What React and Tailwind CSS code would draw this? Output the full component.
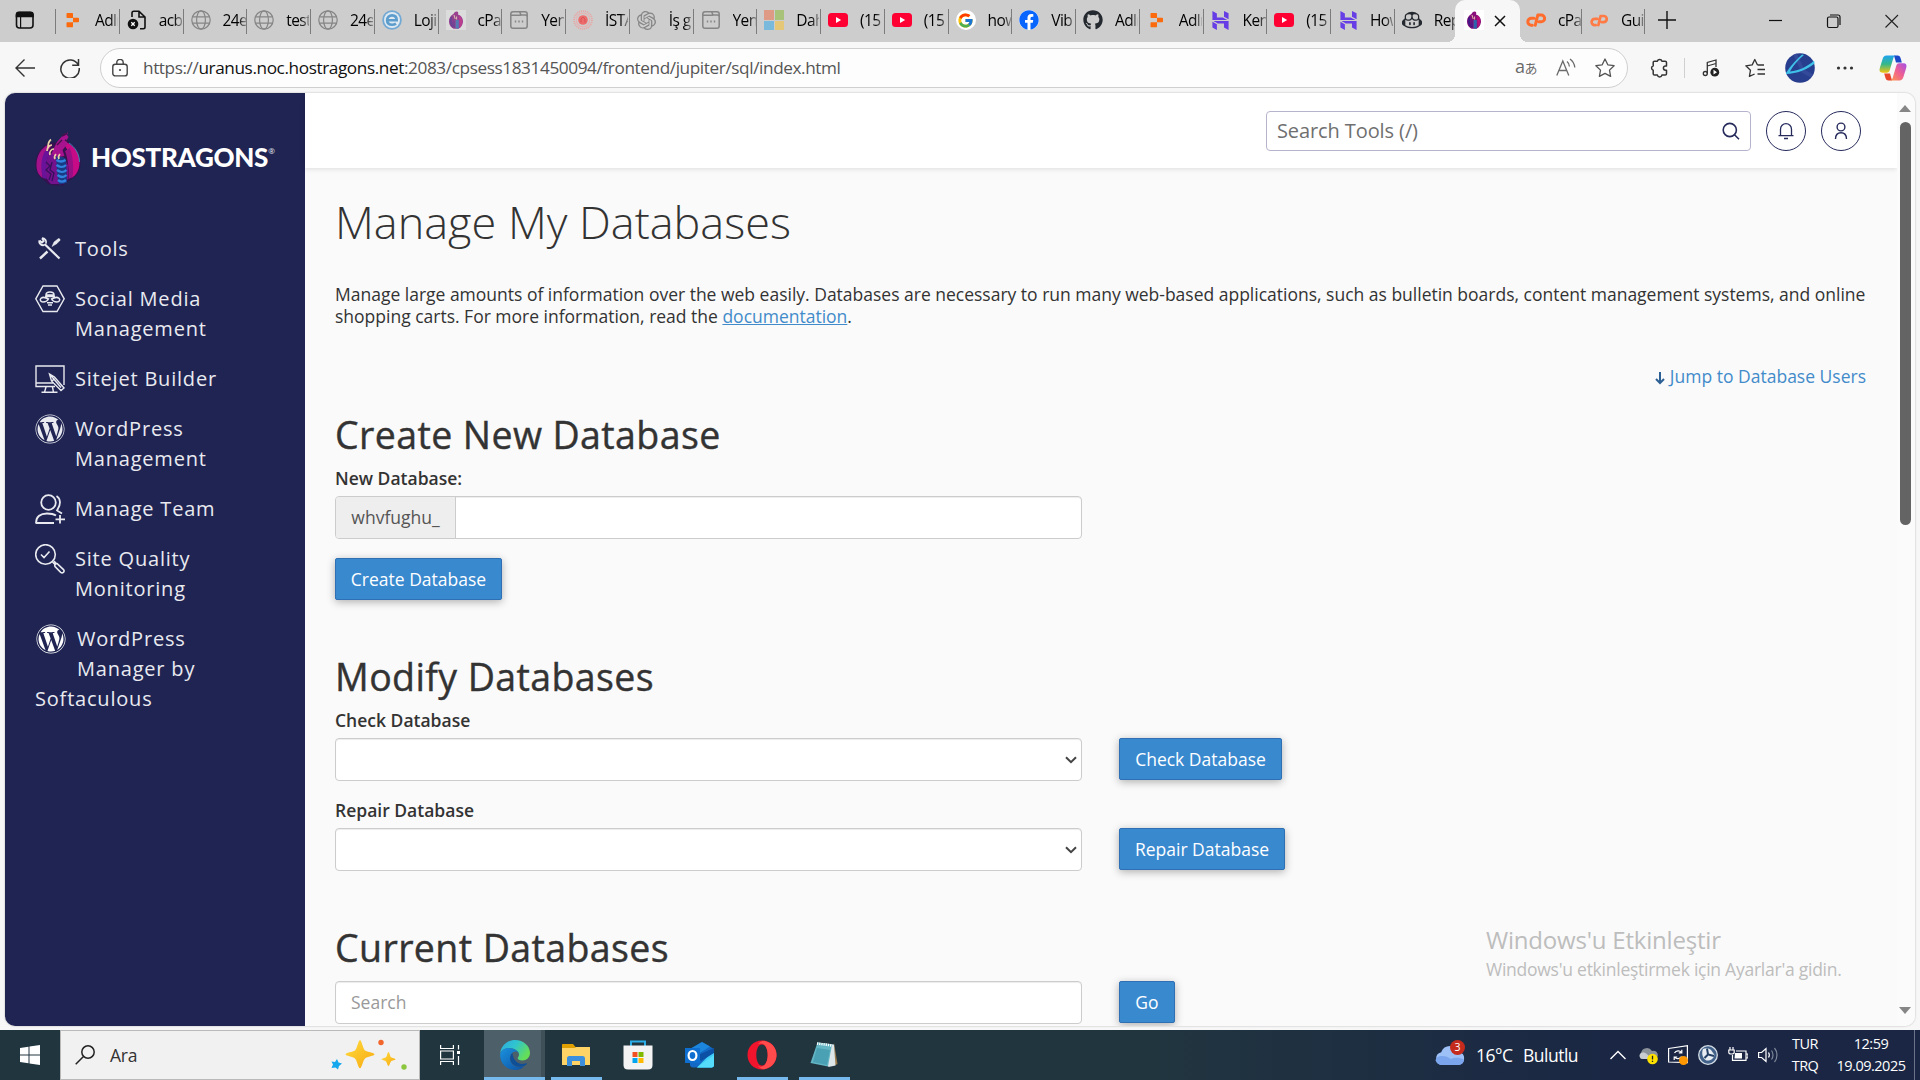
import React from "react";
import { FcGoogle } from "react-icons/fc";
import { FaWordpress, FaGithub, FaFacebook } from "react-icons/fa";
import { SiOpenai, SiGithubcopilot, SiHostinger } from "react-icons/si";

const Globe = () => (
  <svg viewBox="0 0 20 20" className="size-5" fill="none" stroke="#858585" strokeWidth="1.2">
    <circle cx="10" cy="10" r="9.2" />
    <ellipse cx="10" cy="10" rx="4.4" ry="9.2" />
    <path d="M1.5 6.8h17M1.5 13.2h17" />
  </svg>
);
const Adl = () => (
  <svg viewBox="0 0 20 20" className="size-5" fill="#fb6a0c">
    <path d="M4.500 3h4.500c.6 0 1 .4 1 1v4H4.500c-.6 0-1-.4-1-1V4c0-.6.400-1 1-1zM10 7.800h5c.6 0 1 .4 1 1v2.400c0 .6-.4 1-1 1h-5zM4.500 12.200H10v4c0 .6-.4 1-1 1H4.500c-.6 0-1-.4-1-1v-3c0-.6.400-1 1-1z" />
  </svg>
);
const DocX = () => (
  <svg viewBox="0 0 20 20" className="size-5" fill="none" stroke="#111" strokeWidth="1.6">
    <path d="M5 7V3c0-1 .7-1.700 1.700-1.700h5.300L18 7V17c0 1-.7 1.700-1.700 1.700H13M12 1.500V7H18" />
    <circle cx="6" cy="14" r="5.300" fill="#111" stroke="none" />
    <path d="M4.300 12.300l3.400 3.400M7.700 12.300l-3.400 3.400" stroke="#fff" strokeWidth="1.300" />
  </svg>
);
const Loji = () => (
  <svg viewBox="0 0 20 20" className="size-5" fill="none">
    <circle cx="10" cy="10" r="9.800" fill="#72a9d4" />
    <circle cx="10" cy="10" r="8" fill="#dfe9f1" />
    <path d="M5 10.300h9.700c0-3-1.900-4.900-4.700-4.900-2.800 0-4.900 2-4.900 4.700 0 2.900 2 4.700 5 4.700 1.500 0 2.800-.4 3.900-1.200" stroke="#5c9dce" strokeWidth="2.600" />
  </svg>
);
const Dragon = ({ faded }) => (
  <span className={faded ? "flex size-5 items-center justify-center bg-[#e3e1e3] opacity-75" : "flex size-5 items-center justify-center bg-white"}>
    <svg viewBox="0 0 20 20" className="size-5">
      <path d="M10.500 1.500c2 0 2 1.600 1.500 3 3 1 5.300 3.800 5 7.500-.3 3.400-2.300 5.800-4.500 6.800h-5C5 17.500 3 15 3 11.500 3 8 4.700 5.300 7.500 4c.6-1.500 1.700-2.500 3-2.500z" fill="#8a1179" />
      <path d="M4 8c-1 4 0 7.500 3 10L6 6zM8 6l1 12-2-1z" fill="#4a1584" />
      <path d="M13 5c4 3 4.400 8.500.8 12.800z" fill="#b50f7d" />
      <path d="M9.600 10h3.200v8.600H9.600z" fill="#2b62ad" />
      <path d="M8 5l1.200 4M10.600 6.500v3" stroke="#e9d3b0" strokeWidth=".9" />
    </svg>
  </span>
);
const Win = () => (
  <svg viewBox="0 0 20 20" className="size-5" fill="none" stroke="#858585" strokeWidth="1.500">
    <path d="M1.800 4c0-1.500.8-2.300 2.300-2.300h6.500l1.400 3.400h4.200c1.400 0 2 .8 2 2V16c0 1.500-.9 2.300-2.300 2.300H4.100c-1.500 0-2.300-.8-2.300-2.300zM2 5.200h10M11 1.700h5c1.500 0 2.200.8 2.200 2.300v3" />
    <path d="M5.800 11.500h1.400M9.300 11.500h1.400M12.800 11.500h1.400" strokeWidth="1.800" />
  </svg>
);
const Seal = () => (
  <svg viewBox="0 0 20 20" className="size-5" fill="none">
    <circle cx="10" cy="10" r="9" stroke="#e7a6a6" strokeWidth="1.700" strokeDasharray="1.200 .8" />
    <circle cx="10" cy="10" r="6.800" stroke="#e7b1b1" strokeWidth="1.200" />
    <circle cx="10" cy="10" r="4.800" fill="#ee6b6b" />
    <path d="M8 12.500V9l2-2 2 2v3.500" stroke="#d95454" />
  </svg>
);
const Ms = () => (
  <span className="grid size-5 grid-cols-2 gap-px">
    <i className="bg-[#df9a86]" /><i className="bg-[#a9c27a]" /><i className="bg-[#79b9dc]" /><i className="bg-[#e5c877]" />
  </span>
);
const Yt = () => (
  <svg viewBox="0 0 20 20" className="size-5"><rect y="3" width="20" height="14" rx="3.500" fill="#ff0033" /><path d="M8 7l5.200 3L8 13z" fill="#fff" /></svg>
);
const Goog = () => <span className="flex size-5 items-center justify-center rounded-full bg-white"><FcGoogle size={17} /></span>;
const Fb = () => <span className="flex size-5 items-center justify-center rounded-full bg-white"><FaFacebook size={20} color="#0866ff" /></span>;
const CPanelMark = ({ small }) => (
  <svg viewBox="0 0 20 14" className={small ? "h-[13px] w-[18px]" : "h-[14px] w-5"} fill="none" stroke={small ? "#ff7a45" : "#ff6c2c"} strokeWidth="3" strokeLinecap="round" strokeLinejoin="round">
    <path d="M8 5.200H5.300a3.500 3.500 0 0 0 0 7h1M9.300 12.200L11.800 2h3.400a3.400 3.400 0 0 1 0 6.800H13" />
  </svg>
);

const TABS = [
  [<Adl />, "Adlı"], [<DocX />, "acb"], [<Globe />, "24e"], [<Globe />, "test"], [<Globe />, "24e"],
  [<Loji />, "Loji"], [<Dragon faded />, "cPa"], [<Win />, "Yen"], [<Seal />, "İSTA"],
  [<SiOpenai size={19} color="#858585" />, "İş g"], [<Win />, "Yen"], [<Ms />, "Dah"], [<Yt />, "(15"], [<Yt />, "(15"],
  [<Goog />, "how"], [<Fb />, "Vib"], [<FaGithub size={20} color="#24292f" />, "Adlı"], [<Adl />, "Adlı"],
  [<SiHostinger size={19} color="#673de6" />, "Ken"], [<Yt />, "(15"], [<SiHostinger size={19} color="#673de6" />, "How"],
  [<SiGithubcopilot size={20} color="#24292f" />, "Rep"],
];

function Tab({ icon, label, line = true }) {
  return (
    <div className="flex h-full w-[63.75px] shrink-0 items-center">
      <span className="-mt-[2px] ml-[7px] flex w-5 shrink-0 justify-center">{icon}</span>
      <span className="-mt-[3px] ml-3 w-[23px] overflow-hidden bg-gradient-to-r from-black from-65% to-black/30 bg-clip-text text-[15.500px] leading-6 tracking-[-0.6px] whitespace-nowrap text-transparent">{label}</span>
      <span className={line ? "ml-auto h-[25px] w-px bg-[#7c7c7c]" : "ml-auto w-px"} />
    </div>
  );
}

function TabBar() {
  return (
    <div className="flex h-[42px] items-center bg-[#cdcdcd]">
      <svg viewBox="0 0 20 20" className="-mt-[2px] ml-[15px] size-5 shrink-0" fill="none" stroke="#111" strokeWidth="1.600">
        <rect x="1.500" y="2.500" width="16.500" height="15.500" rx="3" />
        <path d="M1.500 4.500c0-1.400.8-2.200 2.200-2.200h12c1.500 0 2.300.8 2.300 2.200v2H1.500z" fill="#111" />
        <path d="M5.600 6v12" strokeWidth="1.200" />
      </svg>
      <span className="ml-5 h-[25px] w-px bg-[#7c7c7c]" />
      <div className="flex h-full w-[1399px] items-center overflow-hidden">
        {TABS.map(([icon, label], i) => <Tab key={i} icon={icon} label={label} line={i !== 21} />)}
      </div>
      <div className="relative flex h-full w-[65px] shrink-0 items-center rounded-t-[10px] bg-[#f7f7f7]">
        <span className="absolute bottom-0 -left-2 size-2 bg-[radial-gradient(circle_at_0_0,transparent_8px,#f7f7f7_8px)]" />
        <span className="absolute -right-2 bottom-0 size-2 bg-[radial-gradient(circle_at_100%_0,transparent_8px,#f7f7f7_8px)]" />
        <span className="-mt-[2px] ml-[9px]"><Dragon /></span>
        <svg viewBox="0 0 12 12" className="ml-[10px] size-3" stroke="#111" strokeWidth="1.500"><path d="M1 1l10 10M11 1L1 11" /></svg>
      </div>
      <div className="-ml-[1px] flex h-full shrink-0 items-center">
        <div className="h-full w-[62px] overflow-hidden"><Tab icon={<CPanelMark />} label="cPa" line={false} /></div>
        <span className="h-[25px] w-px bg-[#7c7c7c]" />
        <div className="h-full w-[62px] overflow-hidden"><Tab icon={<CPanelMark small />} label="Gui" line={false} /></div>
        <span className="h-[25px] w-px bg-[#7c7c7c]" />
      </div>
      <svg viewBox="0 0 18 18" className="-mt-[3px] ml-[13px] size-[18px]" stroke="#111" strokeWidth="1.400"><path d="M9 0v18M0 9h18" /></svg>
      <svg viewBox="0 0 14 14" className="ml-[93px] size-[14px]" stroke="#111" strokeWidth="1.200"><path d="M0 6.500h13" /></svg>
      <svg viewBox="0 0 14 14" className="ml-[44px] size-[14px] overflow-visible" fill="none" stroke="#111" strokeWidth="1.200"><rect x=".5" y="3" width="10.500" height="10.500" rx="1.500" /><path d="M3 1h8c1.500 0 2 .8 2 2v8" /></svg>
      <svg viewBox="0 0 14 14" className="ml-[44px] size-[14px]" stroke="#222" strokeWidth="1.100"><path d="M.5 1l12.500 12.500M13 1L.5 13.500" /></svg>
    </div>
  );
}

function Toolbar() {
  return (
    <div className="flex h-[51px] items-center bg-[#f7f7f7] text-[#333]">
      <svg viewBox="0 0 20 20" className="ml-[15px] size-5 shrink-0" fill="none" stroke="#333" strokeWidth="1.400"><path d="M20 10H1M9.500 1.500L1 10l8.500 8.500" /></svg>
      <svg viewBox="0 0 20 20" className="ml-[25px] size-5 shrink-0" fill="none" stroke="#333" strokeWidth="1.500"><path d="M18.300 7A9.200 9.200 0 1 0 19.200 10M18.500 1v6.300h-6.300" /></svg>
      <div className="ml-5 flex h-[40px] w-[1528px] shrink-0 items-center rounded-full border border-[#cfcfcf] bg-[#fdfdfd]">
        <svg viewBox="0 0 16 18" className="ml-[11px] h-[18px] w-4 shrink-0" fill="none" stroke="#444" strokeWidth="1.400"><rect x=".8" y="5.300" width="14.400" height="11.600" rx="2.500" /><path d="M4.800 5V3.600a3.200 3.200 0 0 1 6.400 0V5" /><circle cx="8" cy="11" r="1.100" fill="#444" stroke="none" /></svg>
        <span className="ml-[15px] text-[17.200px] tracking-[-0.4px] whitespace-nowrap text-[#555]">https://<span className="text-[#111]">uranus.noc.hostragons.net</span>:2083/cpsess1831450094/frontend/jupiter/sql/index.html</span>
        <span className="-mt-[2px] ml-auto w-[23px] text-[18px] leading-5 tracking-[-0.5px] whitespace-nowrap text-[#6b6b6b]">a<span className="font-['Noto_Sans_CJK_JP',sans-serif] text-[13px]">あ</span></span>
        <svg viewBox="0 0 20 20" className="ml-[18px] size-5 shrink-0" fill="none" stroke="#6b6b6b" strokeWidth="1.300"><path d="M.8 17.500L6.800 3l6 14.500M3 12.500h7.700M11 3.500c1.500 1.200 2.400 3 2.400 5M14 1c2.700 2 4.500 5 4.800 8.500" /></svg>
        <svg viewBox="0 0 20 20" className="mr-[12px] ml-[19px] size-5 shrink-0" fill="none" stroke="#555" strokeWidth="1.300" strokeLinejoin="round"><path d="M10 1l2.800 5.800 6.300.9-4.600 4.400 1.100 6.300L10 15.400l-5.600 3 1.100-6.300L.9 7.700l6.300-.9z" /></svg>
      </div>
      <svg viewBox="0 0 20 20" className="ml-[21px] size-5 shrink-0" fill="none" stroke="#333" strokeWidth="1.500" strokeLinejoin="round"><path d="M5.500 3.200h2.900a2.300 2.300 0 0 1 4.500 0h3.300c.8 0 1.300.5 1.300 1.300v3.400h-.900a2.200 2.200 0 0 0 0 4.400h.900v3.500c0 .8-.5 1.300-1.300 1.300h-3.300a2.300 2.300 0 0 1-4.500 0H5.500c-.8 0-1.300-.5-1.300-1.300v-3.500a2.300 2.300 0 0 1 0-4.400V4.500c0-.8.5-1.300 1.300-1.300z" /></svg>
      <span className="ml-[15px] h-5 w-px bg-[#d0d0d0]" />
      <svg viewBox="0 0 20 20" className="ml-4 size-5 shrink-0" fill="none" stroke="#333" strokeWidth="1.300"><circle cx="4.300" cy="15.500" r="2" /><path d="M6.300 15.500V4.500L15 2v7M6.300 8L15 5.500" /><circle cx="13.800" cy="14.200" r="4.400" fill="#222" stroke="none" /><path d="M12.500 11.800l3.500 2.400-3.500 2.400z" fill="#fff" stroke="none" /></svg>
      <svg viewBox="0 0 20 20" className="ml-6 size-5 shrink-0" fill="none" stroke="#333" strokeWidth="1.300" strokeLinejoin="round"><path d="M12.500 7L9.800 1.500 7.200 6.900l-6.400.9 4.700 4.400-1.100 6.200L9.600 16M12.500 7H19M12.500 11.500H20M12.500 16H20" /></svg>
      <svg viewBox="0 0 30 30" className="ml-5 size-[30px] shrink-0"><circle cx="15" cy="15" r="14.800" fill="#273d8e" /><path d="M10 1l8 17 9 5" stroke="#4056a5" strokeWidth="4" fill="none" opacity=".5" /><path d="M1 20C6 12 12 6 17 1.500l2 .5C12 8 8 13 5 18.500c9-1 18-5 24-11l.6 3C22 17 12 20.500 1 21z" fill="#3fc0e8" /></svg>
      <svg viewBox="0 0 20 20" className="ml-5 size-5 shrink-0" fill="#333"><circle cx="3.500" cy="10" r="1.600" /><circle cx="10" cy="10" r="1.600" /><circle cx="16.500" cy="10" r="1.600" /></svg>
      <svg viewBox="0 0 28 28" className="ml-6 size-7 shrink-0">
        <defs>
          <linearGradient id="cpA" x1="0" y1="0" x2="0" y2="1"><stop offset="0" stopColor="#1fa3f0" /><stop offset=".5" stopColor="#35b88a" /><stop offset="1" stopColor="#f4c40f" /></linearGradient>
          <linearGradient id="cpB" x1="1" y1="0" x2="0" y2="1"><stop offset="0" stopColor="#a44fe8" /><stop offset=".5" stopColor="#f06090" /><stop offset="1" stopColor="#fb9a4b" /></linearGradient>
        </defs>
        <path d="M15 1.500h3.500c2 0 2.600 1 3.200 3l1.100 4H17z" fill="#1b48c8" />
        <path d="M13 26.500H9.500c-2 0-2.600-1-3.200-3l-1.100-4H11z" fill="#e9472b" />
        <path d="M7.500 1.500H17c-1.500 0-2.300 1-2.800 3L10.800 16c-.6 2-1.400 2.700-3 2.700H3.500C.8 18.700 0 16.800.8 14L3.600 5c.7-2.300 1.700-3.500 3.900-3.500z" fill="url(#cpA)" />
        <path d="M20.500 26.500H11c1.500 0 2.300-1 2.800-3L17.200 12c.6-2 1.400-2.700 3-2.700h4.300c2.700 0 3.500 1.900 2.700 4.700L24.400 23c-.7 2.300-1.700 3.500-3.900 3.500z" fill="url(#cpB)" />
      </svg>
    </div>
  );
}

const BrandMark = () => (
  <svg viewBox="0 0 46 54" className="h-[54px] w-[46px] shrink-0">
    <path d="M14 11C5 15 0 24 .5 33c.3 7 3 12 8 14.500L13 52l6 1.500h9l5-4.500c7-3 12.500-9 12.500-17C45.800 22 41 14 32 9z" fill="#35124f" />
    <path d="M13 13C6 16 1.500 24 1.500 33c0 6 2 10 6 13 0-12 2-24 9-32z" fill="#a3128a" />
    <path d="M11 18c-5 6-6 18-3 28l4 1c-2-10-1-19 3-27z" fill="#69129a" />
    <path d="M31 10c9 4 14 12 13.500 21-.3 7-3 12-8 15 1-13-1-24-7-33z" fill="#c70b87" />
    <path d="M35 16c3 9 4 19 2.500 29l-4 2c.5-11-.5-20-3.500-28z" fill="#951084" />
    <path d="M34 11c6 4 10.500 11 10.500 19" fill="none" stroke="#27a7c4" strokeWidth=".8" />
    <path d="M14 22c5-1 10 1 15 4l4 7v14l-5 5H16c-5-4-6-11-5-18 .5-5 1-8 3-12z" fill="#74118d" />
    <path d="M18 18l4-8 7-8 4-1.500-1 2.500 1.500 2-2 3.500 1 3.500-5 6 2 6-6 1-7-3z" fill="#a7128e" />
    <path d="M22 13l5-5M27 4l5-2.500M30 8l2 1" stroke="#43104a" strokeWidth="1.400" />
    <path d="M21 25c4-1 8 0 10 2l1 24-8 1.500c-2-8-2-18-3-27.500z" fill="#173a83" />
    <path d="M21.500 28c3 2 6 2 9 0M21.500 33c3 2.500 7 2.500 9.500 0M22 38c3 2.500 7 2.500 9.500 0M22.500 43c3 2.500 6.500 2.500 9 0M23 48c3 2.500 5.500 2 8 0" fill="none" stroke="#3183df" strokeWidth="2.400" />
    <path d="M13 15c0-4 1-6 3-7.500M12 19c0-3 2-6 5-6M15 23c-1-3 1-6 4-6M20 27c-1-2 0-4 1-5M24 27c-1-2 0-4 1-5" fill="none" stroke="#ebd2a6" strokeWidth="1.700" />
    <path d="M11 30l4 4-4 4 5 4-2 6M17 30l-2 8 4 3-2 8" stroke="#35105c" fill="none" strokeWidth="1.300" />
  </svg>
);

const ic = "size-[30px] shrink-0";
const stroke = { fill: "none", stroke: "#e9eaf0", strokeWidth: 1.4 };
const ToolsIcon = () => (
  <svg viewBox="0 0 30 30" className={ic} {...stroke}><path d="M9.500 10L24.500 24.500" strokeWidth="2.200" /><path d="M5 24.500l7.500-7" strokeWidth="2.400" /><path d="M4.200 6.500a4 4 0 0 0 5.300 4.500M7 4.200A4 4 0 0 1 11 9.500M4.500 6.500l2.500 2 1.700-1.500L7 4.300" strokeWidth="1.800" /><path d="M17 12.500l2-4.500 4.500-3.500c1.300 0 1.700.8 1.500 1.800L22 9.500z" fill="#e9eaf0" strokeWidth=".5" /></svg>
);
const BeeIcon = () => (
  <svg viewBox="0 0 30 30" className={ic} {...stroke}><path d="M8 2h14l7.200 12.800L22 27.500H8L.8 14.800z" /><path d="M11 11c0-2 1.800-3 4-3s4 1 4 3zM10 12.500h10M13.500 15c-3-1.700-6-2-7.500-.7-1.500 1.500-.5 3.700 2 3.700 2.400 0 4.500-1.200 5.500-3zM16.500 15c3-1.700 6-2 7.500-.7 1.500 1.500.5 3.700-2 3.700-2.400 0-4.500-1.200-5.500-3zM12 18.800h6M13 21h4" strokeWidth="1.500" /></svg>
);
const SitejetIcon = () => (
  <svg viewBox="0 0 30 30" className={ic} {...stroke}><path d="M20 22.500H1V2h28v19M1 19h18M11 23l-1.500 5.300M17.500 23l1 5.300M6.500 28.300h16M14.500 10l2 7 9.500 9.500 3-2.500-9.500-11zM15 10.500l11 13M17 17l2.500-2.500" /></svg>
);
const TeamIcon = () => (
  <svg viewBox="0 0 30 30" className={ic} {...stroke} strokeWidth="1.800"><circle cx="13.500" cy="8.500" r="7.300" /><path d="M1 29c0-6.500 4.500-9.500 11-9.500 4 0 7 .7 9 2M.5 29H19M21.500 2c4 2.500 4.500 8 1.500 12.500l-1 2 5 3M25 21v8.500M20.500 25.300H30" /></svg>
);
const QualityIcon = () => (
  <svg viewBox="0 0 30 30" className={ic} {...stroke}><circle cx="10.500" cy="10.500" r="9.800" strokeWidth="1.600" /><path d="M6 10.500l3 3 5.500-6M17.500 18l2.500 2.500M19 17l2 2.500M20 22.500c-.8-1.700.8-3.500 2.500-2.700l6 5.800c1.500 1.800-.7 4.300-2.800 2.800z" strokeWidth="1.600" /></svg>
);
const WpIcon = () => <FaWordpress size={30} color="#e9eaf0" className="shrink-0" />;

const NAV = [
  [<ToolsIcon />, ["Tools"]],
  [<BeeIcon />, ["Social Media", "Management"]],
  [<SitejetIcon />, ["Sitejet Builder"]],
  [<WpIcon />, ["WordPress", "Management"]],
  [<TeamIcon />, ["Manage Team"]],
  [<QualityIcon />, ["Site Quality", "Monitoring"]],
];

function Sidebar() {
  return (
    <nav className="flex w-[300px] shrink-0 flex-col bg-[#1f2452] pl-[30px] text-[20px] leading-[30px] tracking-[0.8px] text-[#e9eaf0]">
      <div className="mt-[39px] mb-[38px] flex h-[54px] items-start">
        <BrandMark />
        <span className="mt-[10px] ml-[10px] font-['Lato',sans-serif] text-[26px] leading-[30px] font-black tracking-[-0.3px] text-white">HOSTRAGONS</span>
        <span className="mt-[13px] text-[8px] leading-3 tracking-normal">®</span>
      </div>
      {NAV.map(([icon, lines]) => (
        <div key={lines.join()} className="flex gap-[10px] py-[10px]">
          {icon}
          <div>{lines.map((l) => <div key={l}>{l}</div>)}</div>
        </div>
      ))}
      <div className="py-[10px]">
        <div className="flex gap-[11px] pl-px">
          <FaWordpress size={30} color="#fff" className="shrink-0" />
          <div><div>WordPress</div><div>Manager by</div></div>
        </div>
        <div>Softaculous</div>
      </div>
    </nav>
  );
}

function Header() {
  return (
    <header className="flex h-[75px] shrink-0 items-center justify-end bg-white pr-[36px] shadow-[0_1px_5px_rgba(0,0,0,0.12)]">
      <div className="mt-px flex h-10 w-[485px] items-center rounded border border-[#b5b4cc] bg-white">
        <span className="ml-[10px] text-[20px] tracking-[-0.1px] text-[#6f6f6f]">Search Tools (/)</span>
        <svg viewBox="0 0 18 18" className="mr-[10px] ml-auto size-[18px]" fill="none" stroke="#262b5c" strokeWidth="1.600"><circle cx="7.800" cy="8" r="6.600" /><path d="M12.500 12.700l4.500 4.500" /></svg>
      </div>
      <span className="mt-px ml-[15px] flex size-10 items-center justify-center rounded-full border border-[#262b5c]">
        <svg viewBox="0 0 16 18" className="h-[18px] w-4" fill="none" stroke="#262b5c" strokeWidth="1.300"><path d="M2.500 13.500V7.200a5.500 5.500 0 0 1 11 0v6.300M.5 13.600h15M6 16.500h4" /></svg>
      </span>
      <span className="mt-px ml-[15px] flex size-10 items-center justify-center rounded-full border border-[#262b5c]">
        <svg viewBox="0 0 16 18" className="h-[18px] w-4" fill="none" stroke="#262b5c" strokeWidth="1.400"><circle cx="8" cy="5" r="3.900" /><path d="M2.500 17c0-4 2.200-6.300 5.500-6.300s5.500 2.300 5.500 6.300" /></svg>
      </span>
    </header>
  );
}

const Btn = ({ children, className }) => (
  <button className={"flex h-[42px] shrink-0 items-center justify-center rounded-[2px] border border-[#2e70b3] bg-[#3989cf] pb-px text-[17.500px] whitespace-nowrap text-white shadow-[0_2px_8px_rgba(0,0,0,0.3)] " + className}>{children}</button>
);
const field = "flex h-[43px] w-[747px] items-center rounded-[4px] border border-[#ccc] bg-white shadow-[inset_0_1px_1px_rgba(0,0,0,0.075)]";
const label = "text-[17.500px] leading-[22px] font-semibold";
const h2 = "text-[37.500px] leading-[42px] font-medium tracking-[0.4px] whitespace-nowrap [-webkit-text-stroke:0.4px_#333]";
const Select = () => (
  <div className={field + " justify-end"}>
    <svg viewBox="0 0 12 8" className="mr-[4px] h-2 w-3" fill="none" stroke="#444" strokeWidth="2"><path d="M1 1.200l5 5 5-5" /></svg>
  </div>
);

function Databases() {
  return (
    <main className="min-h-0 flex-1 overflow-hidden pr-[31px] pl-[30px] text-[17.500px] leading-[22px] text-[#333]">
      <h1 className="mt-[29px] text-[45px] leading-[50px] font-light whitespace-nowrap">Manage My Databases</h1>
      <p className="mt-[36px] -mr-5 tracking-[-0.005px] whitespace-nowrap">
        Manage large amounts of information over the web easily. Databases are necessary to run many web-based applications, such as bulletin boards, content management systems, and online<br />
        shopping carts. For more information, read the <a className="text-[#428bca] underline">documentation</a>.
      </p>
      <div className="mt-[38px] flex items-center justify-end text-[#428bca]">
        <svg viewBox="0 0 12 14" className="mt-[3px] mr-[4px] h-[14px] w-3" fill="none" stroke="#2c5f94" strokeWidth="2"><path d="M6 1v11M2 8l4 4 4-4" /></svg>
        <a>Jump to Database Users</a>
      </div>
      <h2 className={"mt-[27px] " + h2}>Create New Database</h2>
      <div className={"mt-[11px] " + label}>New Database:</div>
      <div className={"mt-[7px] " + field}>
        <span className="flex h-full w-[120px] items-center justify-center rounded-l-[3px] border-r border-[#ccc] bg-[#eee] pb-[2px] text-[#555]">whvfughu_</span>
      </div>
      <Btn className="mt-[19px] w-[167px]">Create Database</Btn>
      <h2 className={"mt-[56px] " + h2}>Modify Databases</h2>
      <div className={"mt-[11px] " + label}>Check Database</div>
      <div className="mt-[7px] flex items-start gap-[37px]"><Select /><Btn className="w-[163px]">Check Database</Btn></div>
      <div className={"mt-[18px] " + label}>Repair Database</div>
      <div className="mt-[7px] flex items-start gap-[37px]"><Select /><Btn className="w-[166px]">Repair Database</Btn></div>
      <h2 className={"mt-[56px] " + h2}>Current Databases</h2>
      <div className="mt-[12px] flex items-start gap-[37px]">
        <div className={field}><span className="-mt-px ml-[15px] text-[#999]">Search</span></div>
        <Btn className="w-[56px]">Go</Btn>
      </div>
    </main>
  );
}

function Scrollbar() {
  return (
    <div className="flex w-[18px] shrink-0 flex-col items-center bg-[#fbfbfb] pr-[2px]">
      <svg viewBox="0 0 12 7" className="mt-3 h-[7px] w-3" fill="#868686"><path d="M0 7l6-7 6 7z" /></svg>
      <span className="mt-[10px] h-[403px] w-[11px] rounded-full bg-[#646464]" />
      <svg viewBox="0 0 12 7" className="mt-auto mb-3 h-[7px] w-3" fill="#868686"><path d="M0 0l6 7 6-7z" /></svg>
    </div>
  );
}

const TaskItem = ({ children, className = "w-[62px]", bar }) => (
  <div className={"relative flex h-full shrink-0 items-center justify-center " + className}>
    {children}
    {bar && <span className={"absolute bottom-0 h-[3px] bg-[#76b9ed] " + bar} />}
  </div>
);

function Taskbar() {
  return (
    <div className="flex h-[50px] items-center bg-gradient-to-r from-[#21353f] from-60% to-[#1a2644] to-85% text-white">
      <TaskItem className="w-[60px]">
        <svg viewBox="0 0 20 20" className="size-5" fill="#fff"><path d="M0 3l8.500-1.200v7.700H0zM9.500 1.600L20 0v9.500H9.500zM0 10.500h8.500v7.700L0 17zM9.500 10.500H20V20L9.500 18.400z" /></svg>
      </TaskItem>
      <div className="flex h-full w-[360px] shrink-0 items-center border border-[#b9b9b9] bg-[#f1f1f1]">
        <svg viewBox="0 0 20 20" className="ml-[14px] size-5" fill="none" stroke="#222" strokeWidth="1.500"><circle cx="13" cy="7" r="6.200" /><path d="M8.500 11.500L.7 19.300" /></svg>
        <span className="ml-[15px] text-[17.500px] tracking-[-0.2px] text-[#333]">Ara</span>
        <svg viewBox="0 0 80 40" className="mr-[8px] ml-auto h-10 w-20">
          <defs><linearGradient id="star" x1="0" y1="0" x2="1" y2="1"><stop offset="0" stopColor="#ffdc3e" /><stop offset="1" stopColor="#f7a911" /></linearGradient></defs>
          <path d="M29 5c1.600 0 3 9 5 10.500s9.500 2 9.500 3.800-7.500 2.200-9.500 4.200-3.300 9.800-5 9.800-3-7.800-5-9.800-9.500-2.400-9.500-4.200 7.500-2.300 9.500-3.800S27.400 5 29 5z" fill="url(#star)" />
          <path d="M57.500 17c1 0 1.500 4.500 2.500 5.300s4.500 1 4.500 2-3.500 1.200-4.500 2.200-1.500 4.500-2.500 4.500-1.500-3.500-2.500-4.500-4.500-1.200-4.500-2.200 3.500-1.200 4.500-2 1.500-5.300 2.500-5.300z" fill="url(#star)" />
          <path d="M6 24l1.500 3.500 3.500 1-3 2.500-1 3.500-2.500-2-4 .500 1.500-3.500-1.500-3 3.500.5z" fill="#13a8ee" />
          <circle cx="50" cy="7.500" r="2.700" fill="#f2652b" /><circle cx="73" cy="32" r="2.700" fill="#8cc63f" />
        </svg>
      </div>
      <TaskItem className="w-[64px]">
        <svg viewBox="0 0 20 20" className="ml-[-4px] size-5" fill="none" stroke="#fff" strokeWidth="1.200"><path d="M.6 0v3.500h12.800V0M.6 20v-3.500h12.800V20M.6 6h12.800v8H.6zM18.500 0v4.500M18.500 11v9" /><path d="M17 6h3v3h-3z" fill="#fff" stroke="none" /></svg>
      </TaskItem>
      <TaskItem className="w-[57px] bg-[#4d5f68]" bar="left-0 w-[61px] z-10">
        <svg viewBox="0 0 30 30" className="ml-1 size-[30px]">
          <defs>
            <linearGradient id="ed1" x1="0" y1="0" x2="1" y2=".5"><stop offset="0" stopColor="#2fa9e0" /><stop offset=".5" stopColor="#2fc4cf" /><stop offset="1" stopColor="#65de57" /></linearGradient>
            <linearGradient id="ed2" x1="0" y1="0" x2="1" y2="1"><stop offset="0" stopColor="#1a92de" /><stop offset="1" stopColor="#0d4fa2" /></linearGradient>
          </defs>
          <path d="M.2 13.500C1 5.500 7.500 0 15 0c8.500 0 15 6 15 13 0 4.500-3.500 7.500-7.500 7.500-3.300 0-4.800-1.300-4.800-2.300s1.300-1.400 1.300-3.700C19 11 14 8 9 8c-4 0-7.500 2.300-8.800 5.500z" fill="url(#ed1)" />
          <path d="M.2 13.500C1.500 10 5 8 9 8c5 0 10 3 10 6.500 0-1.500-1.500-3-3.500-3-3 0-5.500 3-5.500 7 0 5 4.500 8.500 9.500 8.500 2 0 4-.500 5.500-1.500-2.500 3-6 4.500-10 4.500C6.500 30-.7 23 .2 13.500z" fill="url(#ed2)" />
          <path d="M12.500 13c-2.500 2-3 6-1.500 9 2.500 5 10 6.500 15.500 2.500.7-.7.300-1.500-.600-1.200-5.500 2.200-12.500-.8-13.400-10.300z" fill="#0f4f98" />
        </svg>
      </TaskItem>
      <span className="h-full w-1 bg-[#3f5058]" />
      <TaskItem className="w-[62px]" bar="left-[6px] w-[51px]">
        <svg viewBox="0 0 28 24" className="h-6 w-7"><path d="M0 2c0-.6.400-1 1-1h10l2.500 3H28v18H0z" fill="#e0a100" /><path d="M0 5h12.500l2-1H27c.6 0 1 .4 1 1v17H0z" fill="#fdd465" /><path d="M5 23v-7.500c0-1.500.8-2.500 2.300-2.500h13.400c1.500 0 2.300 1 2.300 2.500V23h-5v-5h-8v5z" fill="#3b8fdc" /></svg>
      </TaskItem>
      <TaskItem>
        <svg viewBox="0 0 30 30" className="size-[30px]"><path d="M8 7V1.500h14V7" fill="none" stroke="#29aee8" strokeWidth="2" /><path d="M.5 5.500h29V25c0 3-1.500 4.500-4.500 4.500H5C2 29.500.5 28 .5 25z" fill="#f3f3f4" /><path d="M9.500 12h5v5h-5z" fill="#f25022" /><path d="M15.500 12h5v5h-5z" fill="#7fba00" /><path d="M9.500 18h5v5h-5z" fill="#00a4ef" /><path d="M15.500 18h5v5h-5z" fill="#ffb900" /></svg>
      </TaskItem>
      <TaskItem>
        <svg viewBox="0 0 30 30" className="size-[30px]"><path d="M5 9L17 2l12 7v16c0 1.500-1 2.500-2.500 2.500H8c-1.800 0-3-1-3-3z" fill="#1268c4" /><path d="M5 9l12-7 8 4.500-14 9z" fill="#1b86dc" /><path d="M29 10v15c0 1.500-1 2.500-2.500 2.500H12z" fill="#41cdf5" /><path d="M11 16l18-8v5l-13 8z" fill="#0b50a4" /><path d="M12 27.500L29 15v10c0 1.500-1 2.500-2.500 2.500z" fill="#55dcfb" /><path d="M0 8h15v15H0z" fill="#0f6fd0" /><ellipse cx="7.500" cy="15.500" rx="3.900" ry="4.500" fill="none" stroke="#fff" strokeWidth="2.200" /></svg>
      </TaskItem>
      <TaskItem bar="left-[6px] w-[51px]">
        <svg viewBox="0 0 30 30" className="size-[30px]"><path fillRule="evenodd" d="M15 .5c8.500 0 14.500 6.500 14.500 14.500S23.500 29.500 15 29.500.5 23 .5 15 6.500.5 15 .5zm0 4c-3.700 0-5.700 5-5.700 10.500s2 10.500 5.700 10.500 5.700-5 5.700-10.500S18.700 4.500 15 4.500z" fill="#f0142c" /><path d="M17 .8C24 2 29.500 7.500 29.500 15S24 28 17 29.200c-2.500-.2-4.500-1.200-6-3.200 6 3 9.700-3.500 9.700-11S17 1.500 11 4c1.500-2 3.500-3 6-3.200z" fill="#ff4b4b" /></svg>
      </TaskItem>
      <TaskItem bar="left-[6px] w-[51px]">
        <svg viewBox="0 0 28 28" className="size-7"><path d="M24 2l3.500 21-3 1.500z" fill="#9c7c4c" /><path d="M7.500 1.500L24 3.500l1.500 21-7 1.500z" fill="#dde6e8" /><path d="M7.500 1.500l14.500 2L18 25.500.5 22z" fill="#65b6c4" /><path d="M7 7l13 2-3 15-14-3z" fill="#3d98ad" opacity=".7" /><path d="M7 2.500l15 2" stroke="#fff" strokeWidth="2.500" strokeDasharray="1.200 1" /></svg>
      </TaskItem>

      <div className="ml-auto flex h-full items-center">
        <span className="relative flex items-center">
          <svg viewBox="0 0 30 20" className="-mt-px h-5 w-[30px]"><path d="M7 20a6.500 6.500 0 0 1-.8-12.800A9.500 9.500 0 0 1 24 7a6.600 6.600 0 0 1-.7 13z" fill="#9dc0f7" /><path d="M2 12.500c4-2.500 10-1.500 14 1.500 3-1.500 8-2 13 .5A6 6 0 0 1 23.500 20H7c-3.500 0-6-2.500-6.500-5z" fill="#7ba6ee" /></svg>
          <span className="absolute -top-[6px] left-[15px] flex size-[15px] items-center justify-center rounded-full bg-[#c42b1c] text-[10.500px] leading-none">3</span>
        </span>
        <span className="ml-[11px] w-[47px] text-[17.500px] tracking-[-0.500px] whitespace-nowrap">16°C</span>
        <span className="w-[87px] text-[17.500px] tracking-[-0.500px] whitespace-nowrap">Bulutlu</span>
        <svg viewBox="0 0 16 10" className="h-[10px] w-4" fill="none" stroke="#fff" strokeWidth="1.400"><path d="M.5 9L8 1.500 15.500 9" /></svg>
        <svg viewBox="0 0 20 20" className="ml-3 size-5"><path d="M3 14a4 4 0 0 1 0-6 6 6 0 0 1 11-2 4 4 0 0 1 3 8z" fill="#8b9299" /><path d="M5 14c-3 0-4-3-3-5 3-3 8-1 10 5z" fill="#c9cdd1" /><circle cx="14.500" cy="14" r="5.300" fill="#ffe100" /><path d="M14.500 10.800v3.800M14.500 15.800v1.300" stroke="#222" strokeWidth="1.300" /></svg>
        <svg viewBox="0 0 20 20" className="ml-[10px] size-5" fill="none" stroke="#fff" strokeWidth="1.200"><path d="M.6 3.500L19.400.7v17L.6 17zM6.500 8c1.500-2.500 5-3 7-.5M13.800 4.800v3h-3M13.500 11.500c-1.500 2.500-5 3-7 .5M6.200 15v-3h3" /><circle cx="15.500" cy="15.500" r="4.500" fill="#ff9800" stroke="none" /></svg>
        <svg viewBox="0 0 20 20" className="ml-[10px] size-5"><circle cx="10" cy="10" r="9.300" fill="#41618a" stroke="#d4dde5" strokeWidth="1.300" /><path d="M5 4c3-1.500 6-1 8 1l3.500 5c-1 4-4.500 6-8 5.500C5 14 3 9 5 4z" fill="#e7edf2" /><path d="M9 3.500l1 6 6 1.500M9.500 10l-3 3" stroke="#233f66" strokeWidth="2" fill="none" /></svg>
        <svg viewBox="0 0 20 16" className="ml-[10px] h-4 w-5" fill="none" stroke="#fff" strokeWidth="1.200"><path d="M4.500 8v5.400h13.500V4H8M18.500 7H20v4h-1.500M2 0v3M5 0v3M.8 3h5.400v2.500c0 1-1 1.500-2.700 1.500S.8 6.500.8 5.500z" /><path d="M7 6h7v5.500H6.500z" fill="#fff" stroke="none" /></svg>
        <svg viewBox="0 0 20 16" className="ml-[10px] h-4 w-5" fill="none" stroke="#fff" strokeWidth="1.200"><path d="M.6 5.500h3L8 1.500v13L3.600 10.500h-3zM10.500 5.500c1 1.500 1 3.500 0 5" /><path d="M13.500 3.500c2 2.500 2 6.500 0 9M16.500 1c3.300 4 3.300 10 0 14" stroke="#7e8799" /></svg>
        <div className="ml-[10px] w-[34px] text-center text-[14.500px] leading-[22px] tracking-[-0.5px]"><div>TUR</div><div>TRQ</div></div>
        <div className="ml-[12px] w-[74px] text-center text-[14.500px] leading-[22px] tracking-[-0.5px] whitespace-nowrap"><div>12:59</div><div>19.09.2025</div></div>
        <span className="mr-[5px] ml-[6px] h-full w-px bg-[#6b7488]" />
      </div>
    </div>
  );
}

export default function App() {
  return (
    <div className="relative flex h-[1080px] w-[1920px] flex-col overflow-hidden bg-[#f7f7f7] font-['Open_Sans','Noto_Sans',sans-serif]">
      <TabBar />
      <Toolbar />
      <div className="mr-[5px] ml-[5px] flex h-[933px] shrink-0 overflow-hidden rounded-[10px] bg-[#fafafa] shadow-[0_0_2px_rgba(0,0,0,0.3)]">
        <Sidebar />
        <div className="flex min-w-0 flex-1 flex-col"><Header /><Databases /></div>
        <Scrollbar />
      </div>
      <div className="mt-auto"><Taskbar /></div>
      <div className="absolute top-[922px] left-[1486px] whitespace-nowrap text-[#bdbdbd]">
        <div className="text-[24px] leading-[36px] tracking-[-0.2px]">Windows'u Etkinleştir</div>
        <div className="text-[17.500px] leading-[22px] tracking-[-0.25px]">Windows'u etkinleştirmek için Ayarlar'a gidin.</div>
      </div>
    </div>
  );
}
